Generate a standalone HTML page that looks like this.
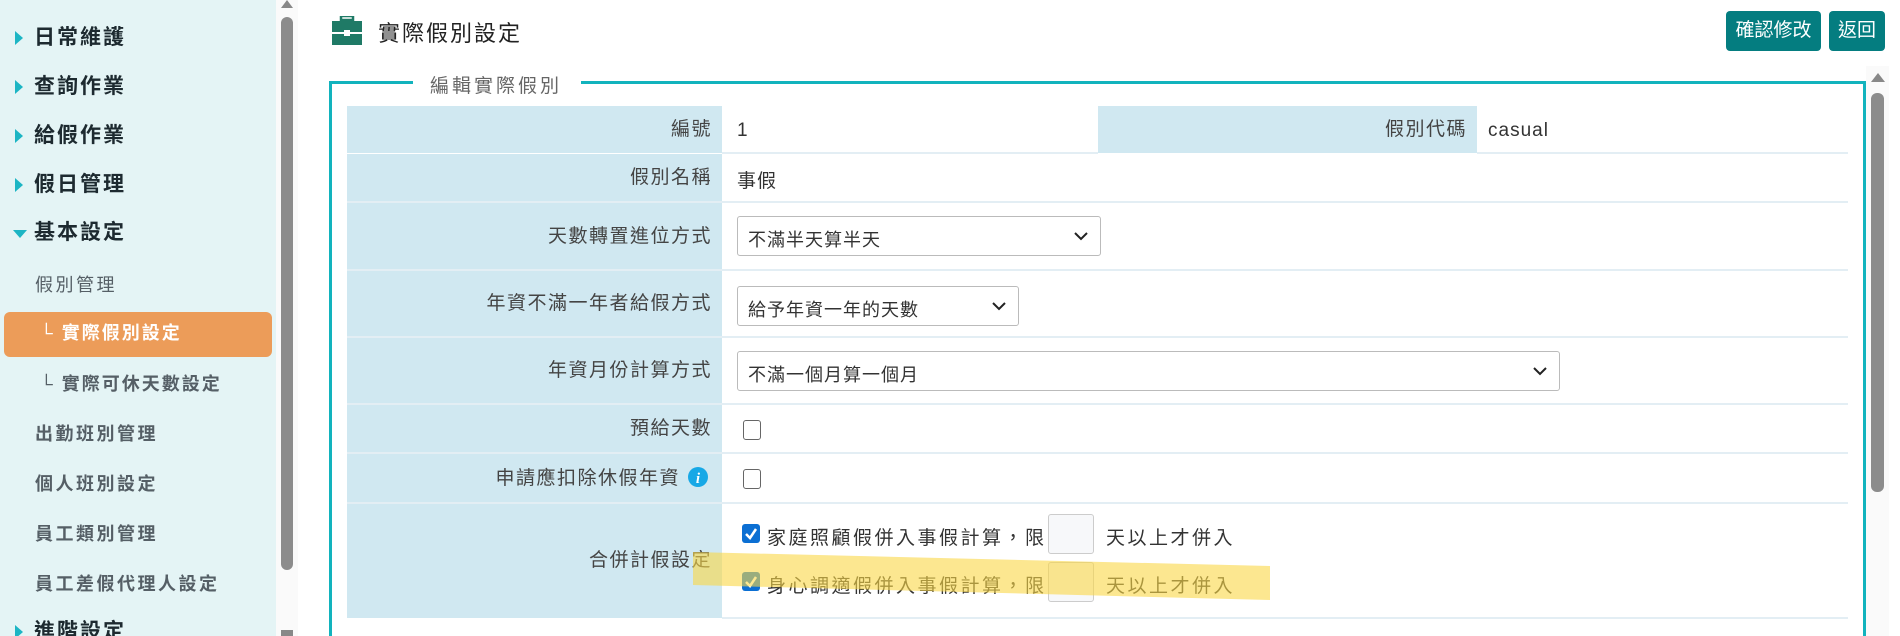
<!DOCTYPE html>
<html><head><meta charset="utf-8"><style>
*{margin:0;padding:0;box-sizing:border-box}
html,body{width:1900px;height:636px;overflow:hidden}
body{background:#fff;position:relative;font-family:"Liberation Sans","Noto Sans CJK TC",sans-serif;}
.a{position:absolute}
.side{left:0;top:0;width:276px;height:636px;background:#e4f4f5}
.m{position:absolute;left:34px;font-size:21px;font-weight:bold;color:#1d2a30;letter-spacing:2px;line-height:24px}
.tri{position:absolute;left:15px;width:0;height:0;border-top:7px solid transparent;border-bottom:7px solid transparent;border-left:8px solid #1cb5c4}
.s{position:absolute;left:35px;font-size:18px;color:#555f66;letter-spacing:2.5px;line-height:22px;font-weight:600}
.lab{position:absolute;left:347px;width:375px;background:#d0e8f1;color:#444;font-size:19px;letter-spacing:1.5px;text-align:right;padding-right:10px}
.line{position:absolute;left:347px;width:1501px;height:2px;background:#e3eef4}
.val{position:absolute;font-size:19px;color:#333;letter-spacing:1px}
.sel{position:absolute;left:737px;height:40px;border:1px solid #bbb;border-radius:3px;background:#fff;font-size:18px;color:#333;padding:9px 0 0 10px;letter-spacing:1px}
.sel svg{position:absolute;right:12px;top:14px}
.cb{position:absolute;width:18px;height:20px;border:1.5px solid #666;border-radius:3px;background:#fff}
.cbx{position:absolute;width:18px;height:19px;border-radius:3px;background:#0b6fd3}
.inp{position:absolute;width:46px;height:40px;border:1px solid #ccc;border-radius:3px;background:#f7f8fa}
.btn{position:absolute;top:11px;height:40px;background:#047d80;color:#fff;border-radius:4px;font-size:19px;text-align:center;line-height:40px}
</style></head><body>
<div class="a side"></div>
<div class="tri" style="top:31px"></div><div class="m" style="top:26px">日常維護</div>
<div class="tri" style="top:80px"></div><div class="m" style="top:75px">查詢作業</div>
<div class="tri" style="top:129px"></div><div class="m" style="top:124px">給假作業</div>
<div class="tri" style="top:178px"></div><div class="m" style="top:173px">假日管理</div>
<div class="a" style="left:13px;top:230px;border-left:7px solid transparent;border-right:7px solid transparent;border-top:8px solid #1cb5c4"></div><div class="m" style="top:221px">基本設定</div>
<div class="s" style="top:274px;font-weight:normal">假別管理</div>
<div class="a" style="left:4px;top:312px;width:268px;height:45px;background:#ec9c59;border-radius:6px"></div>
<div class="s" style="top:322px;left:40px;color:#fff;letter-spacing:2px;font-weight:bold">└ 實際假別設定</div>
<div class="s" style="top:373px;left:40px;letter-spacing:2px">└ 實際可休天數設定</div>
<div class="s" style="top:423px">出勤班別管理</div>
<div class="s" style="top:473px">個人班別設定</div>
<div class="s" style="top:523px">員工類別管理</div>
<div class="s" style="top:573px">員工差假代理人設定</div>
<div class="tri" style="top:625px"></div><div class="m" style="top:620px">進階設定</div>
<div class="a" style="left:276px;top:0;width:22px;height:636px;background:#fafafa"></div>
<div class="a" style="left:281px;top:0;border-left:6px solid transparent;border-right:6px solid transparent;border-bottom:8px solid #888"></div>
<div class="a" style="left:281px;top:17px;width:12px;height:553px;background:#8c8c8c;border-radius:6px"></div>
<div class="a" style="left:281px;top:630px;width:12px;height:6px;background:#888"></div>
<svg class="a" style="left:332px;top:16px" width="30" height="30" viewBox="0 0 30 30"><rect x="9" y="0" width="12" height="4" fill="none" stroke="#1f7a66" stroke-width="2.5"/><rect x="0" y="5" width="30" height="11" fill="#1f7a66"/><rect x="0" y="18" width="30" height="11" fill="#1f7a66"/><rect x="12" y="14" width="6" height="6" fill="#fff"/></svg>
<div class="a" style="left:378px;top:16px;font-size:22px;color:#222;letter-spacing:2px">實際假別設定</div>
<div class="btn" style="left:1726px;width:95px">確認修改</div>
<div class="btn" style="left:1829px;width:56px">返回</div>
<div class="a" style="left:329px;top:81px;width:3px;height:555px;background:#12b3bd"></div>
<div class="a" style="left:329px;top:81px;width:1537px;height:3px;background:#12b3bd"></div>
<div class="a" style="left:1863px;top:81px;width:3px;height:555px;background:#12b3bd"></div>
<div class="a" style="left:413px;top:72px;width:168px;height:22px;background:#fff"></div>
<div class="a" style="left:430px;top:71px;font-size:19px;color:#666;letter-spacing:3px">編輯實際假別</div>
<div class="a" style="left:1866px;top:66px;width:23px;height:570px;background:#fafafa"></div>
<div class="a" style="left:1871px;top:73px;border-left:7px solid transparent;border-right:7px solid transparent;border-bottom:9px solid #888"></div>
<div class="a" style="left:1871px;top:93px;width:13px;height:399px;background:#8c8c8c;border-radius:6px"></div>
<div class="lab" style="top:106px;height:47px;line-height:47px">編號</div>
<div class="val" style="left:737px;top:120px">1</div>
<div class="lab" style="left:1098px;width:379px;top:106px;height:47px;line-height:47px">假別代碼</div>
<div class="val" style="left:1488px;top:120px">casual</div>
<div class="line" style="top:152px;left:722px;width:376px"></div>
<div class="line" style="top:152px;left:1477px;width:371px"></div>
<div class="lab" style="top:154px;height:48px;line-height:48px">假別名稱</div>
<div class="val" style="left:737px;top:166px">事假</div>
<div class="line" style="top:201px"></div>
<div class="lab" style="top:203px;height:67px;line-height:67px">天數轉置進位方式</div>
<div class="sel" style="top:216px;width:364px">不滿半天算半天<svg width="14" height="10"><path d="M1 2 L7 8 L13 2" fill="none" stroke="#222" stroke-width="2"/></svg></div>
<div class="line" style="top:269px"></div>
<div class="lab" style="top:271px;height:66px;line-height:66px">年資不滿一年者給假方式</div>
<div class="sel" style="top:286px;width:282px">給予年資一年的天數<svg width="14" height="10"><path d="M1 2 L7 8 L13 2" fill="none" stroke="#222" stroke-width="2"/></svg></div>
<div class="line" style="top:336px"></div>
<div class="lab" style="top:338px;height:66px;line-height:66px">年資月份計算方式</div>
<div class="sel" style="top:351px;width:823px">不滿一個月算一個月<svg width="14" height="10"><path d="M1 2 L7 8 L13 2" fill="none" stroke="#222" stroke-width="2"/></svg></div>
<div class="line" style="top:403px"></div>
<div class="lab" style="top:405px;height:48px;line-height:48px">預給天數</div>
<div class="cb" style="left:743px;top:420px"></div>
<div class="line" style="top:452px"></div>
<div class="lab" style="top:454px;height:49px;line-height:49px;padding-right:42px">申請應扣除休假年資</div>
<svg class="a" style="left:688px;top:467px" width="20" height="20"><circle cx="10" cy="10" r="10" fill="#17a8e6"/><text x="10" y="16" font-size="15" font-style="italic" font-weight="bold" fill="#fff" text-anchor="middle" font-family="Liberation Serif,serif">i</text></svg>
<div class="cb" style="left:743px;top:469px"></div>
<div class="line" style="top:502px"></div>
<div class="lab" style="top:504px;height:114px;line-height:114px">合併計假設定</div>
<div class="line" style="top:617px;left:722px;width:1126px"></div>
<div class="cbx" style="left:742px;top:524px"></div>
<svg class="a" style="left:744px;top:527px" width="14" height="13"><path d="M2 7 L6 11 L12 2" fill="none" stroke="#fff" stroke-width="2.5"/></svg>
<div class="val" style="left:767px;top:523px;font-size:19px;letter-spacing:2.5px">家庭照顧假併入事假計算，限</div>
<div class="inp" style="left:1048px;top:514px"></div>
<div class="val" style="left:1106px;top:523px;font-size:19px;letter-spacing:2.5px">天以上才併入</div>
<div class="cbx" style="left:742px;top:572px"></div>
<svg class="a" style="left:744px;top:575px" width="14" height="13"><path d="M2 7 L6 11 L12 2" fill="none" stroke="#fff" stroke-width="2.5"/></svg>
<div class="val" style="left:767px;top:571px;font-size:19px;letter-spacing:2.5px">身心調適假併入事假計算，限</div>
<div class="inp" style="left:1048px;top:562px"></div>
<div class="val" style="left:1106px;top:571px;font-size:19px;letter-spacing:2.5px">天以上才併入</div>
<svg class="a" style="left:0;top:0" width="1900" height="636"><polygon points="693,552 1270,566 1270,600 693,585" fill="rgba(250,215,70,0.6)"/></svg>
</body></html>
